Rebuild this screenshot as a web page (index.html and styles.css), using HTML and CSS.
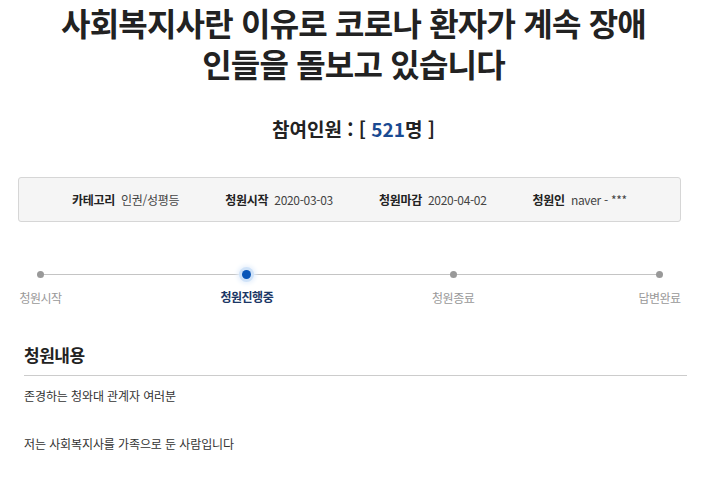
FILE: index.html
```html
<!DOCTYPE html>
<html lang="ko">
<head>
    <meta charset="UTF-8">
    <meta name="viewport" content="width=device-width, initial-scale=1.0">
    <title>청원 상세</title>
    <link rel="stylesheet" href="styles.css">
</head>
<body>

    <div class="petition">
        <h1 class="title">사회복지사란 이유로 코로나 환자가 계속 장애<br>인들을 돌보고 있습니다</h1>

        <h2 class="count">참여인원 : [ <span class="num">521</span>명 ]</h2>

        <ul class="info">
            <li><strong>카테고리</strong> 인권/성평등</li>
            <li><strong>청원시작</strong> 2020-03-03</li>
            <li><strong>청원마감</strong> 2020-04-02</li>
            <li><strong>청원인</strong> naver - ***</li>
        </ul>

        <div class="progress">
            <div class="step"><span class="dot"></span><span class="label">청원시작</span></div>
            <div class="step active"><span class="dot"></span><span class="label">청원진행중</span></div>
            <div class="step"><span class="dot"></span><span class="label">청원종료</span></div>
            <div class="step"><span class="dot"></span><span class="label">답변완료</span></div>
        </div>

        <div class="content">
            <h4 class="content-head">청원내용</h4>
            <div class="content-body">존경하는 청와대 관계자 여러분

저는 사회복지사를 가족으로 둔 사람입니다</div>
        </div>
    </div>

</body>
</html>
```

FILE: styles.css
```css
body {
    margin: 0;
    background-color: #fff;
    color: #333;
    font-family: "Noto Sans CJK KR", "Noto Sans", sans-serif;
}
.petition {
    padding-top: 2px;
}
.title {
    margin: 0;
    font-size: 32px;
    line-height: 41px;
    font-weight: bold;
    letter-spacing: -0.8px;
    color: #222;
    text-align: center;
}
.count {
    margin: 31px 0 0;
    font-size: 19px;
    line-height: 28px;
    font-weight: bold;
    color: #222;
    text-align: center;
}
.count .num {
    color: #1a4a92;
}
.info {
    list-style: none;
    margin: 34px 26px 0 18px;
    padding: 13px 0;
    display: flex;
    justify-content: center;
    gap: 46px;
    background-color: #f5f5f5;
    border: 1px solid #d6d6d6;
    border-radius: 3px;
    font-size: 12px;
    line-height: 17px;
    letter-spacing: -0.3px;
    color: #444;
}
.info strong {
    color: #222;
    margin-right: 3px;
}
.progress {
    position: relative;
    margin: 48px 47px 0 40px;
    display: flex;
    justify-content: space-between;
}
.progress::before {
    content: "";
    position: absolute;
    left: 0;
    right: 0;
    top: 4px;
    height: 1px;
    background-color: #c4c4c4;
}
.step {
    width: 1px;
    display: flex;
    flex-direction: column;
    align-items: center;
    gap: 12px;
}
.dot {
    position: relative;
    width: 7px;
    height: 7px;
    margin-top: 1px;
    border-radius: 50%;
    background-color: #999;
}
.label {
    white-space: nowrap;
    font-size: 12px;
    line-height: 16px;
    letter-spacing: -0.5px;
    color: #999;
}
.active .dot {
    width: 9px;
    height: 9px;
    margin-top: 0;
    margin-bottom: -2px;
    background-color: #0a56b8;
    box-shadow: 0 0 0 3px #cfe2f8, 0 0 4px 5px #e8f1fc;
}
.active .label {
    font-weight: bold;
    color: #1b3766;
}
.content {
    margin: 37px 20px 0 24px;
}
.content-head {
    margin: 0;
    padding-bottom: 8px;
    border-bottom: 1px solid #ccc;
    font-size: 17px;
    line-height: 24px;
    font-weight: bold;
    letter-spacing: -0.5px;
    color: #222;
}
.content-body {
    margin-top: 8px;
    white-space: pre-line;
    font-size: 12px;
    line-height: 24px;
    letter-spacing: -0.1px;
    color: #333;
}
```
